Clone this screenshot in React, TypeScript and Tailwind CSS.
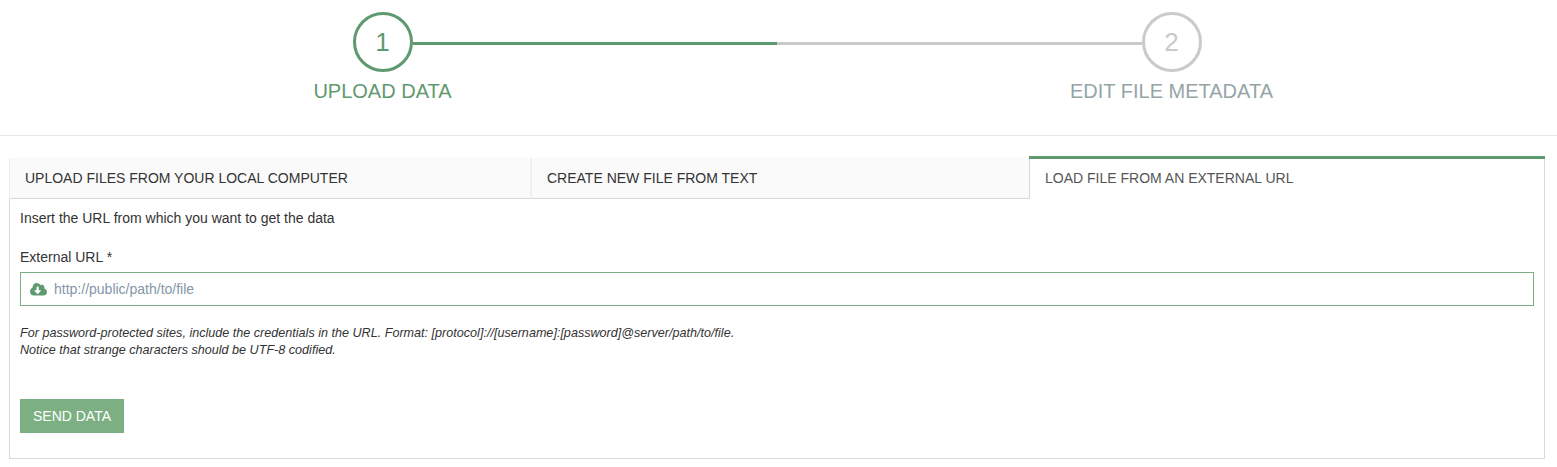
import { FaCloudDownloadAlt } from "react-icons/fa";

function Step({ number, label, active }: { number: number; label: string; active?: boolean }) {
  return (
    <div className="flex w-[60px] flex-col items-center">
      <div
        className={
          "flex size-[60px] shrink-0 items-center justify-center rounded-full border-[3px] pr-px text-[26px] leading-[30px] " +
          (active ? "border-[#5f996f] text-[#5f996f]" : "border-[#cacaca] text-[#cacaca]")
        }
      >
        {number}
      </div>
      <div
        className={
          "mt-[5px] whitespace-nowrap pr-px text-[20px] leading-[28px] " +
          (active ? "text-[#5f996f]" : "text-[#95a5a6]")
        }
      >
        {label}
      </div>
    </div>
  );
}

export default function App() {
  return (
    <div className="h-[467px] w-[1557px] overflow-hidden bg-white font-['Liberation_Sans',Arial,sans-serif] text-[14px] leading-5 text-[#333]">
      <header className="flex h-[136px] border-b border-[#e7e7ec] pl-[353px] pt-3">
        <Step number={1} label="UPLOAD DATA" active />
        <div className="mt-[30px] h-[3px] w-[364px] bg-[#5f996f]" />
        <div className="mt-[30px] h-[3px] w-[365px] bg-[#cacaca]" />
        <Step number={2} label="EDIT FILE METADATA" />
      </header>

      <main className="ml-[9px] mt-5 w-[1536px]">
        <nav className="flex h-[43px] items-end">
          <button className="h-[41px] w-[522px] border-b border-l border-r border-b-[#d9d9d9] border-l-[#eeeeee] border-r-[#f0f0f0] bg-[#fafafa] pl-[15px] text-left">
            UPLOAD FILES FROM YOUR LOCAL COMPUTER
          </button>
          <button className="h-[41px] w-[498px] border-b border-l border-b-[#d9d9d9] border-l-[#f0f0f0] bg-[#fafafa] pl-[15px] text-left">
            CREATE NEW FILE FROM TEXT
          </button>
          <button className="flex h-[43px] w-[516px] flex-col border-t-[3px] border-t-[#5f996f] text-left text-[#555]">
            <span className="flex h-10 w-full items-center border-x border-[#d9d9d9] pb-0.5 pl-[15px]">
              LOAD FILE FROM AN EXTERNAL URL
            </span>
          </button>
        </nav>

        <section className="h-[260px] border-x border-b border-[#d9d9d9] px-[10px] pt-[9px]">
          <p>Insert the URL from which you want to get the data</p>
          <label htmlFor="external-url" className="mt-[19px] block">
            External URL *
          </label>
          <div className="mt-[5px] flex h-[34px] items-center border border-[#7cb082] pl-[9px]">
            <FaCloudDownloadAlt
              preserveAspectRatio="none"
              className="mt-px h-[14.5px] w-[17px] shrink-0 text-[#5f996f]"
            />
            <input
              id="external-url"
              placeholder="http://public/path/to/file"
              className="ml-[7px] h-8 flex-1 bg-transparent outline-none placeholder:text-[#8496a9]"
            />
          </div>
          <p className="mt-[19px] text-[12.6px] italic leading-[17px]">
            For password-protected sites, include the credentials in the URL. Format:
            [protocol]://[username]:[password]@server/path/to/file.
            <br />
            Notice that strange characters should be UTF-8 codified.
          </p>
          <button className="mt-[40px] block h-[34px] w-[104px] bg-[#7cb082] text-white">SEND DATA</button>
        </section>
      </main>
    </div>
  );
}
